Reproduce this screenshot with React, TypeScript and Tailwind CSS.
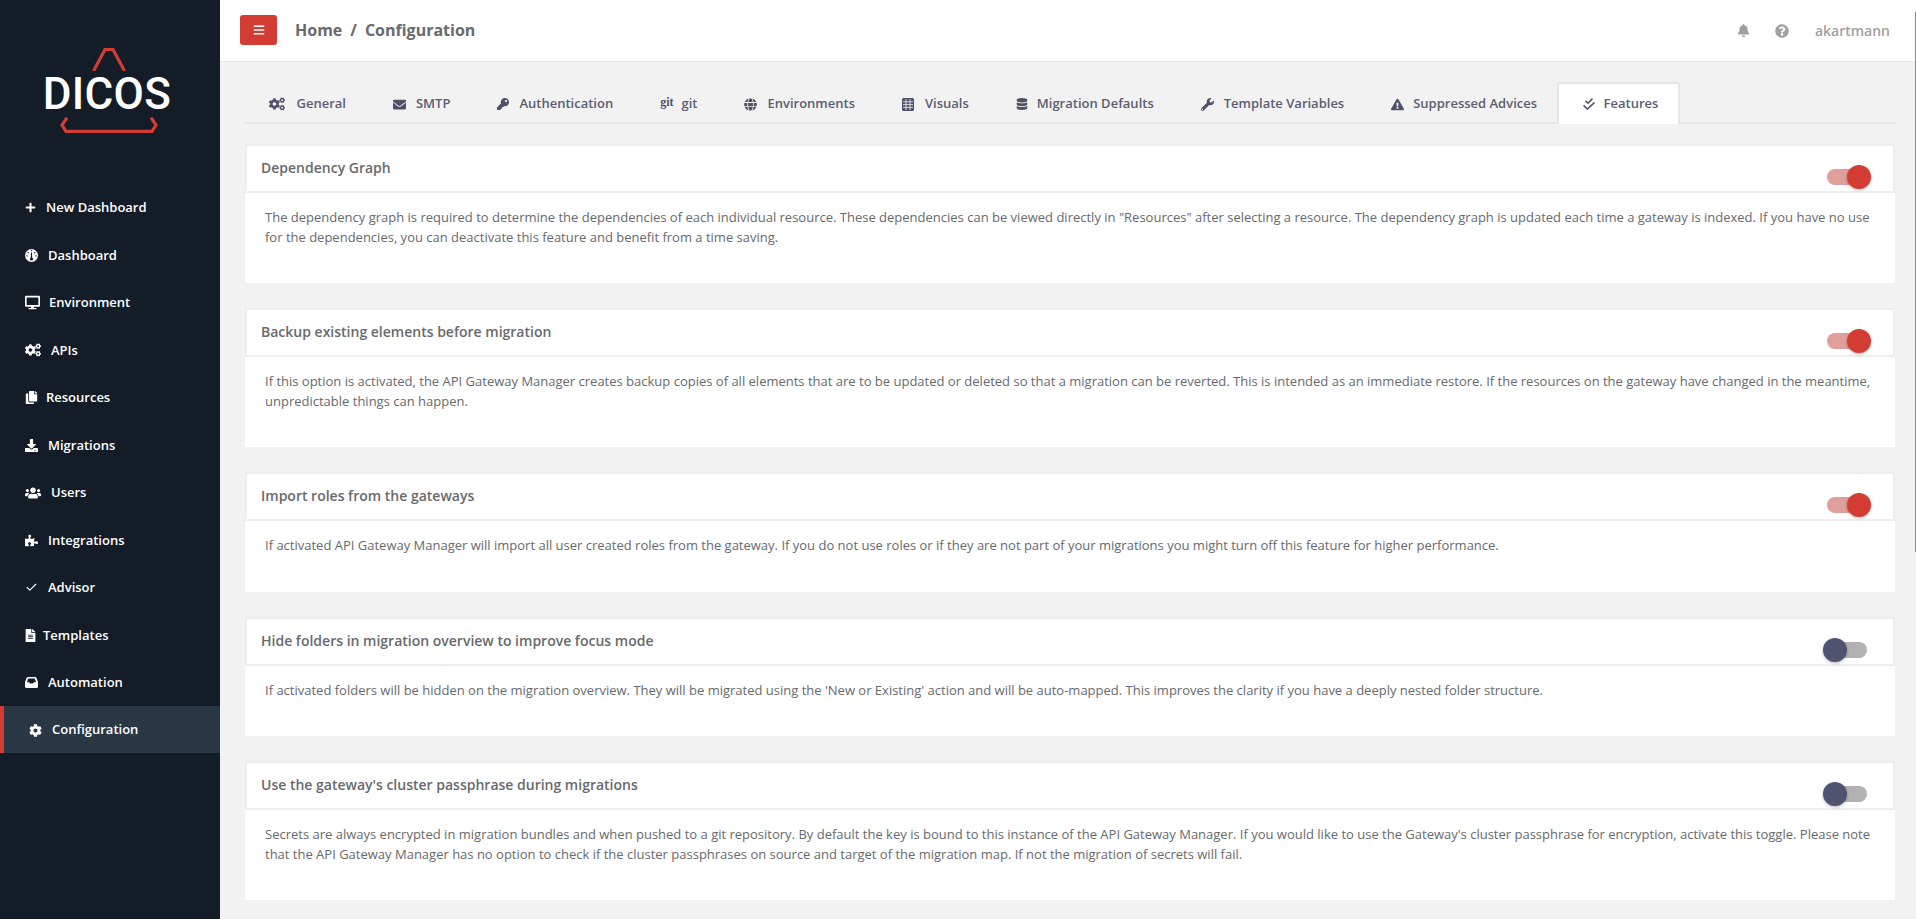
import {
  FaBars, FaBell, FaCog, FaCogs, FaCopy, FaDatabase, FaDesktop, FaDownload, FaEnvelope,
  FaExclamationTriangle, FaFileAlt, FaGlobe, FaKey, FaPlus, FaPuzzlePiece,
  FaQuestionCircle, FaUsers, FaWrench,
} from "react-icons/fa";
import { LuCheck } from "react-icons/lu";

function GaugeIcon() {
  return (
    <svg width="13" height="13" viewBox="0 0 13 13">
      <circle cx="6.5" cy="6.5" r="6.5" fill="#fff" />
      <path d="M6 3.5 H7 L7.2 9 H5.8 Z" fill="#131c27" />
      <circle cx="6.5" cy="10" r="1.6" fill="#131c27" />
      <rect x="5.9" y="0.9" width="1.2" height="1.2" fill="#131c27" />
      <rect x="2.6" y="3" width="1.2" height="1.2" fill="#131c27" />
      <rect x="9.2" y="3" width="1.2" height="1.2" fill="#131c27" />
      <rect x="1.4" y="6.3" width="1.2" height="1.2" fill="#131c27" />
      <rect x="10.4" y="6.3" width="1.2" height="1.2" fill="#131c27" />
    </svg>
  );
}

function TrayIcon() {
  return (
    <svg width="13" height="11" viewBox="0 0 13 11">
      <path
        fillRule="evenodd"
        d="M3 0 H10 Q11 0 11.5 1 L13 5 V9.5 Q13 11 11.5 11 H1.5 Q0 11 0 9.5 V5 L1.5 1 Q2 0 3 0 Z M3.2 1.6 L2 5.2 H4.2 L5 6.6 H8 L8.8 5.2 H11 L9.8 1.6 Z"
        fill="#fff"
      />
    </svg>
  );
}

function DoubleCheckIcon() {
  return (
    <svg width="12" height="12" viewBox="0 0 12 12" fill="none" stroke="#4f5168" strokeWidth="1.6">
      <path d="M2.5 3 L5 5.2 L9.5 0.6" />
      <path d="M0.6 7.4 L4.4 11 L11.4 4.6" />
    </svg>
  );
}

function GridIcon() {
  return (
    <svg width="12" height="13" viewBox="0 0 12 13">
      <rect width="12" height="13" rx="1.5" fill="#4f5168" />
      <path d="M4 1 V12 M8 1 V12 M1 3.8 H11 M1 6.6 H11 M1 9.4 H11" stroke="#f2f2f2" strokeWidth="0.8" />
    </svg>
  );
}

const navItems = [
  { label: "New Dashboard", icon: <FaPlus size={11} />, gap: "gap-[10px]" },
  { label: "Dashboard", icon: <GaugeIcon />, gap: "gap-[10px]" },
  { label: "Environment", icon: <FaDesktop size={15} />, gap: "gap-[9px]" },
  { label: "APIs", icon: <FaCogs size={16} />, gap: "gap-[10px]" },
  { label: "Resources", icon: <FaCopy size={13} />, gap: "gap-[8px]" },
  { label: "Migrations", icon: <FaDownload size={13} />, gap: "gap-[10px]" },
  { label: "Users", icon: <FaUsers size={16} />, gap: "gap-[10px]" },
  { label: "Integrations", icon: <FaPuzzlePiece size={13} />, gap: "gap-[10px]" },
  { label: "Advisor", icon: <LuCheck size={13} />, gap: "gap-[10px]" },
  { label: "Templates", icon: <FaFileAlt size={13} className="-ml-[1px]" />, gap: "gap-[6px]" },
  { label: "Automation", icon: <TrayIcon />, gap: "gap-[10px]" },
];

const tabs = [
  { label: "General", icon: <FaCogs size={16} />, gap: "gap-[12px]" },
  { label: "SMTP", icon: <FaEnvelope size={13} />, gap: "gap-[10px]" },
  { label: "Authentication", icon: <FaKey size={12} />, gap: "gap-[10px]" },
  { label: "git", icon: <span className="font-['Liberation_Serif',serif] text-[12px] relative -top-[2px]">git</span>, gap: "gap-[8px]" },
  { label: "Environments", icon: <FaGlobe size={13} />, gap: "gap-[10px]" },
  { label: "Visuals", icon: <GridIcon />, gap: "gap-[11px]" },
  { label: "Migration Defaults", icon: <FaDatabase size={12} />, gap: "gap-[9px]" },
  { label: "Template Variables", icon: <FaWrench size={13} />, gap: "gap-[10px]" },
  { label: "Suppressed Advices", icon: <FaExclamationTriangle size={13} />, gap: "gap-[9px]" },
];

const features = [
  {
    title: "Dependency Graph",
    on: true,
    height: "h-[139px]",
    text: 'The dependency graph is required to determine the dependencies of each individual resource. These dependencies can be viewed directly in "Resources" after selecting a resource. The dependency graph is updated each time a gateway is indexed. If you have no use for the dependencies, you can deactivate this feature and benefit from a time saving.',
  },
  {
    title: "Backup existing elements before migration",
    on: true,
    height: "h-[139px]",
    text: "If this option is activated, the API Gateway Manager creates backup copies of all elements that are to be updated or deleted so that a migration can be reverted. This is intended as an immediate restore. If the resources on the gateway have changed in the meantime, unpredictable things can happen.",
  },
  {
    title: "Import roles from the gateways",
    on: true,
    height: "h-[120px]",
    text: "If activated API Gateway Manager will import all user created roles from the gateway. If you do not use roles or if they are not part of your migrations you might turn off this feature for higher performance.",
  },
  {
    title: "Hide folders in migration overview to improve focus mode",
    on: false,
    height: "h-[119px]",
    text: "If activated folders will be hidden on the migration overview. They will be migrated using the 'New or Existing' action and will be auto-mapped. This improves the clarity if you have a deeply nested folder structure.",
  },
  {
    title: "Use the gateway's cluster passphrase during migrations",
    on: false,
    height: "h-[139px]",
    text: "Secrets are always encrypted in migration bundles and when pushed to a git repository. By default the key is bound to this instance of the API Gateway Manager. If you would like to use the Gateway's cluster passphrase for encryption, activate this toggle. Please note that the API Gateway Manager has no option to check if the cluster passphrases on source and target of the migration map. If not the migration of secrets will fail.",
  },
];

function Logo() {
  return (
    <div className="flex flex-col items-center h-[159px] pt-[48px]">
      <svg width="34" height="23" viewBox="0 0 34 23" fill="none" className="ml-[-3px]">
        <path d="M1.5 23 L13 1.5 H21 L32.5 23" stroke="#d33c33" strokeWidth="3.2" />
      </svg>
      <div className="font-['Roboto',sans-serif] font-medium text-white text-[44px] leading-[39px] tracking-[0.3px] h-[39px] mt-[4px] ml-[-6px]">
        DICOS
      </div>
      <svg width="98" height="16" viewBox="0 0 98 16" fill="none" className="mt-[3px] ml-[-3px]">
        <path d="M7 0.5 L2 8 L6 14.4 H92 L96 8 L91 0.5" stroke="#d33c33" strokeWidth="3.2" />
      </svg>
    </div>
  );
}

function Toggle({ on }: { on: boolean }) {
  return (
    <div className={`relative w-[40px] h-[16px] rounded-full mt-[23px] mr-[26px] ${on ? "bg-[#e19f9b]" : "bg-[#b2b2b2]"}`}>
      <div
        className={`absolute top-[-4px] w-[24px] h-[24px] rounded-full shadow-[0_1px_3px_rgba(0,0,0,0.3)] ${
          on ? "right-[-4px] bg-[#d33c33]" : "left-[-4px] bg-[#515470]"
        }`}
      />
    </div>
  );
}

export default function App() {
  return (
    <div className="relative flex h-screen overflow-hidden bg-[#f2f2f2] font-['Open_Sans',sans-serif]">
      <aside className="w-[220px] shrink-0 bg-[#131c27] text-white">
        <Logo />
        <nav className="pt-[25px]">
          {navItems.map((item) => (
            <div key={item.label} className={`flex items-center h-[47.5px] pl-[25px] text-[13px] font-semibold ${item.gap}`}>
              <span className="flex justify-center shrink-0">{item.icon}</span>
              <span>{item.label}</span>
            </div>
          ))}
          <div className="flex items-center gap-[10px] h-[47px] pt-[2px] pl-[25px] text-[13px] font-semibold bg-[#2a3745] border-l-4 border-[#d33c33] mt-[-1px]">
            <FaCog size={13} />
            <span>Configuration</span>
          </div>
        </nav>
      </aside>

      <main className="flex-1 min-w-0 flex flex-col">
        <header className="h-[62px] shrink-0 bg-white border-b border-[#e7e7e7] flex items-center pl-[20px] pr-[26px]">
          <button className="w-[37px] h-[30px] bg-[#d33c33] rounded-[3px] flex items-center justify-center text-white mb-[1px]">
            <FaBars size={12} />
          </button>
          <div className="ml-[18px] mb-[2px] text-[16px] font-bold text-[#676a6c]">
            Home<span className="mx-[8px]">/</span>Configuration
          </div>
          <div className="ml-auto flex items-center text-[#a0a0a0]">
            <FaBell size={13} />
            <FaQuestionCircle size={14} className="ml-[25px]" />
            <span className="ml-[26px] text-[14px] font-semibold mb-[1px]">akartmann</span>
          </div>
        </header>

        <div className="flex-1 pl-[25px] pr-[21px]">
          <div className="h-[62px] pt-[20px] border-b-2 border-[#e6e6e9] flex">
            <div className="flex">
              {tabs.map((tab) => (
                <div key={tab.label} className={`flex items-center h-[42px] pt-[2px] px-[23.5px] text-[13px] font-semibold text-[#5b5d72] whitespace-nowrap ${tab.gap}`}>
                  <span className="text-[#4f5168] flex">{tab.icon}</span>
                  {tab.label}
                </div>
              ))}
              <div className="flex items-center gap-[9px] pl-[24px] pr-[20px] h-[42px] bg-white border-2 border-b-0 border-[#e6e6e9] rounded-t-[3px] text-[13px] font-semibold text-[#5b5d72] -ml-[4px]">
                <DoubleCheckIcon />
                Features
              </div>
            </div>
          </div>

          <div className="flex flex-col gap-[25px] pt-[20px]">
            {features.map((f) => (
              <section key={f.title} className={`bg-white ${f.height}`}>
                <div className="h-[49px] border-2 border-[#eeeeee] flex justify-between pl-[14px]">
                  <h3 className="text-[14px] font-semibold text-[#676a6c] leading-[44px]">{f.title}</h3>
                  <Toggle on={f.on} />
                </div>
                <p className="px-[20px] pt-[14px] text-[13px] leading-[20px] text-[#676a6c]">{f.text}</p>
              </section>
            ))}
          </div>
        </div>
      </main>
      <div className="absolute right-0 top-[12px] h-[540px] w-[1px] bg-[#8a8a8a]" />
    </div>
  );
}
